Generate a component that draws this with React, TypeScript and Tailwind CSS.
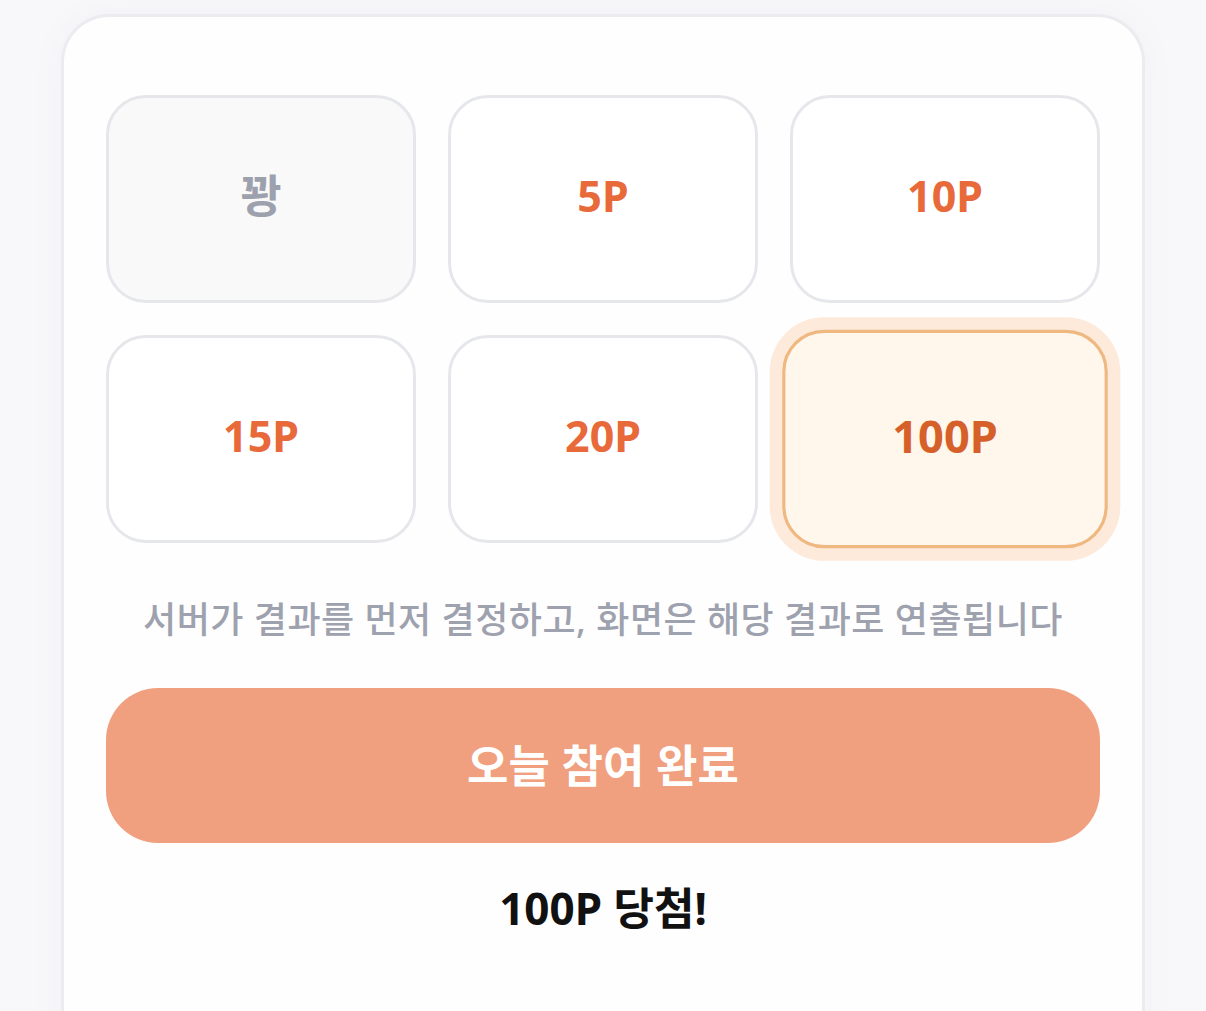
import React from "react";

const cells = [
  { label: "꽝", kind: "miss" },
  { label: "5P", kind: "normal" },
  { label: "10P", kind: "normal" },
  { label: "15P", kind: "normal" },
  { label: "20P", kind: "normal" },
  { label: "100P", kind: "selected" },
];

export default function App() {
  return (
    <div
      className="min-h-[1011px] w-full bg-[#f8f8fa] pt-[14px] overflow-hidden"
      style={{ fontFamily: '"Noto Sans", "Noto Sans CJK KR", sans-serif' }}
    >
      <div className="mx-[61px] rounded-t-[48px] border-[3px] border-b-0 border-[#ebebf0] bg-[#fefefe] px-[42px] pt-[78px] pb-[40px] shadow-[0_0_40px_rgba(0,0,0,0.03)]">
        <div className="grid grid-cols-3 gap-[32px]">
          {cells.map((c) => {
            if (c.kind === "selected") {
              return (
                <div
                  key={c.label}
                  className="flex h-[208px] scale-[1.05] items-center justify-center rounded-[40px] border-[3px] border-[#efb880] bg-[#fff6ec] pb-[6px] shadow-[0_0_0_12px_#fdeadb]"
                >
                  <span className="text-[43px] font-bold text-[#d6602a]">{c.label}</span>
                </div>
              );
            }
            if (c.kind === "miss") {
              return (
                <div
                  key={c.label}
                  className="flex h-[208px] items-center justify-center rounded-[40px] border-[3px] border-[#e6e7eb] bg-[#f9f9fa] pb-[6px]"
                >
                  <span className="text-[45px] font-bold text-[#9ca1ad]">{c.label}</span>
                </div>
              );
            }
            return (
              <div
                key={c.label}
                className="flex h-[208px] items-center justify-center rounded-[40px] border-[3px] border-[#e6e7eb] bg-white pb-[6px]"
              >
                <span className="text-[43px] font-bold text-[#e8693a]">{c.label}</span>
              </div>
            );
          })}
        </div>

        <p className="mt-[53px] text-center text-[36px] font-medium leading-[48px] tracking-[0.5px] text-[#9ea2ae]">
          서버가 결과를 먼저 결정하고, 화면은 해당 결과로 연출됩니다
        </p>

        <button className="mt-[44px] flex h-[155px] w-full items-center justify-center rounded-[52px] bg-[#f0a07f]">
          <span className="text-[45px] font-bold text-white">오늘 참여 완료</span>
        </button>

        <p className="mt-[41px] text-center text-[44px] font-bold leading-[48px] text-[#111111]">
          100P 당첨!
        </p>

        <p className="mt-[73px] text-center text-[32px] leading-[44px] text-[#c4c6cd]">
          매일 한 번만 참여할 수 있어요. 내일 다시 도전해 보세요
        </p>
      </div>
    </div>
  );
}
